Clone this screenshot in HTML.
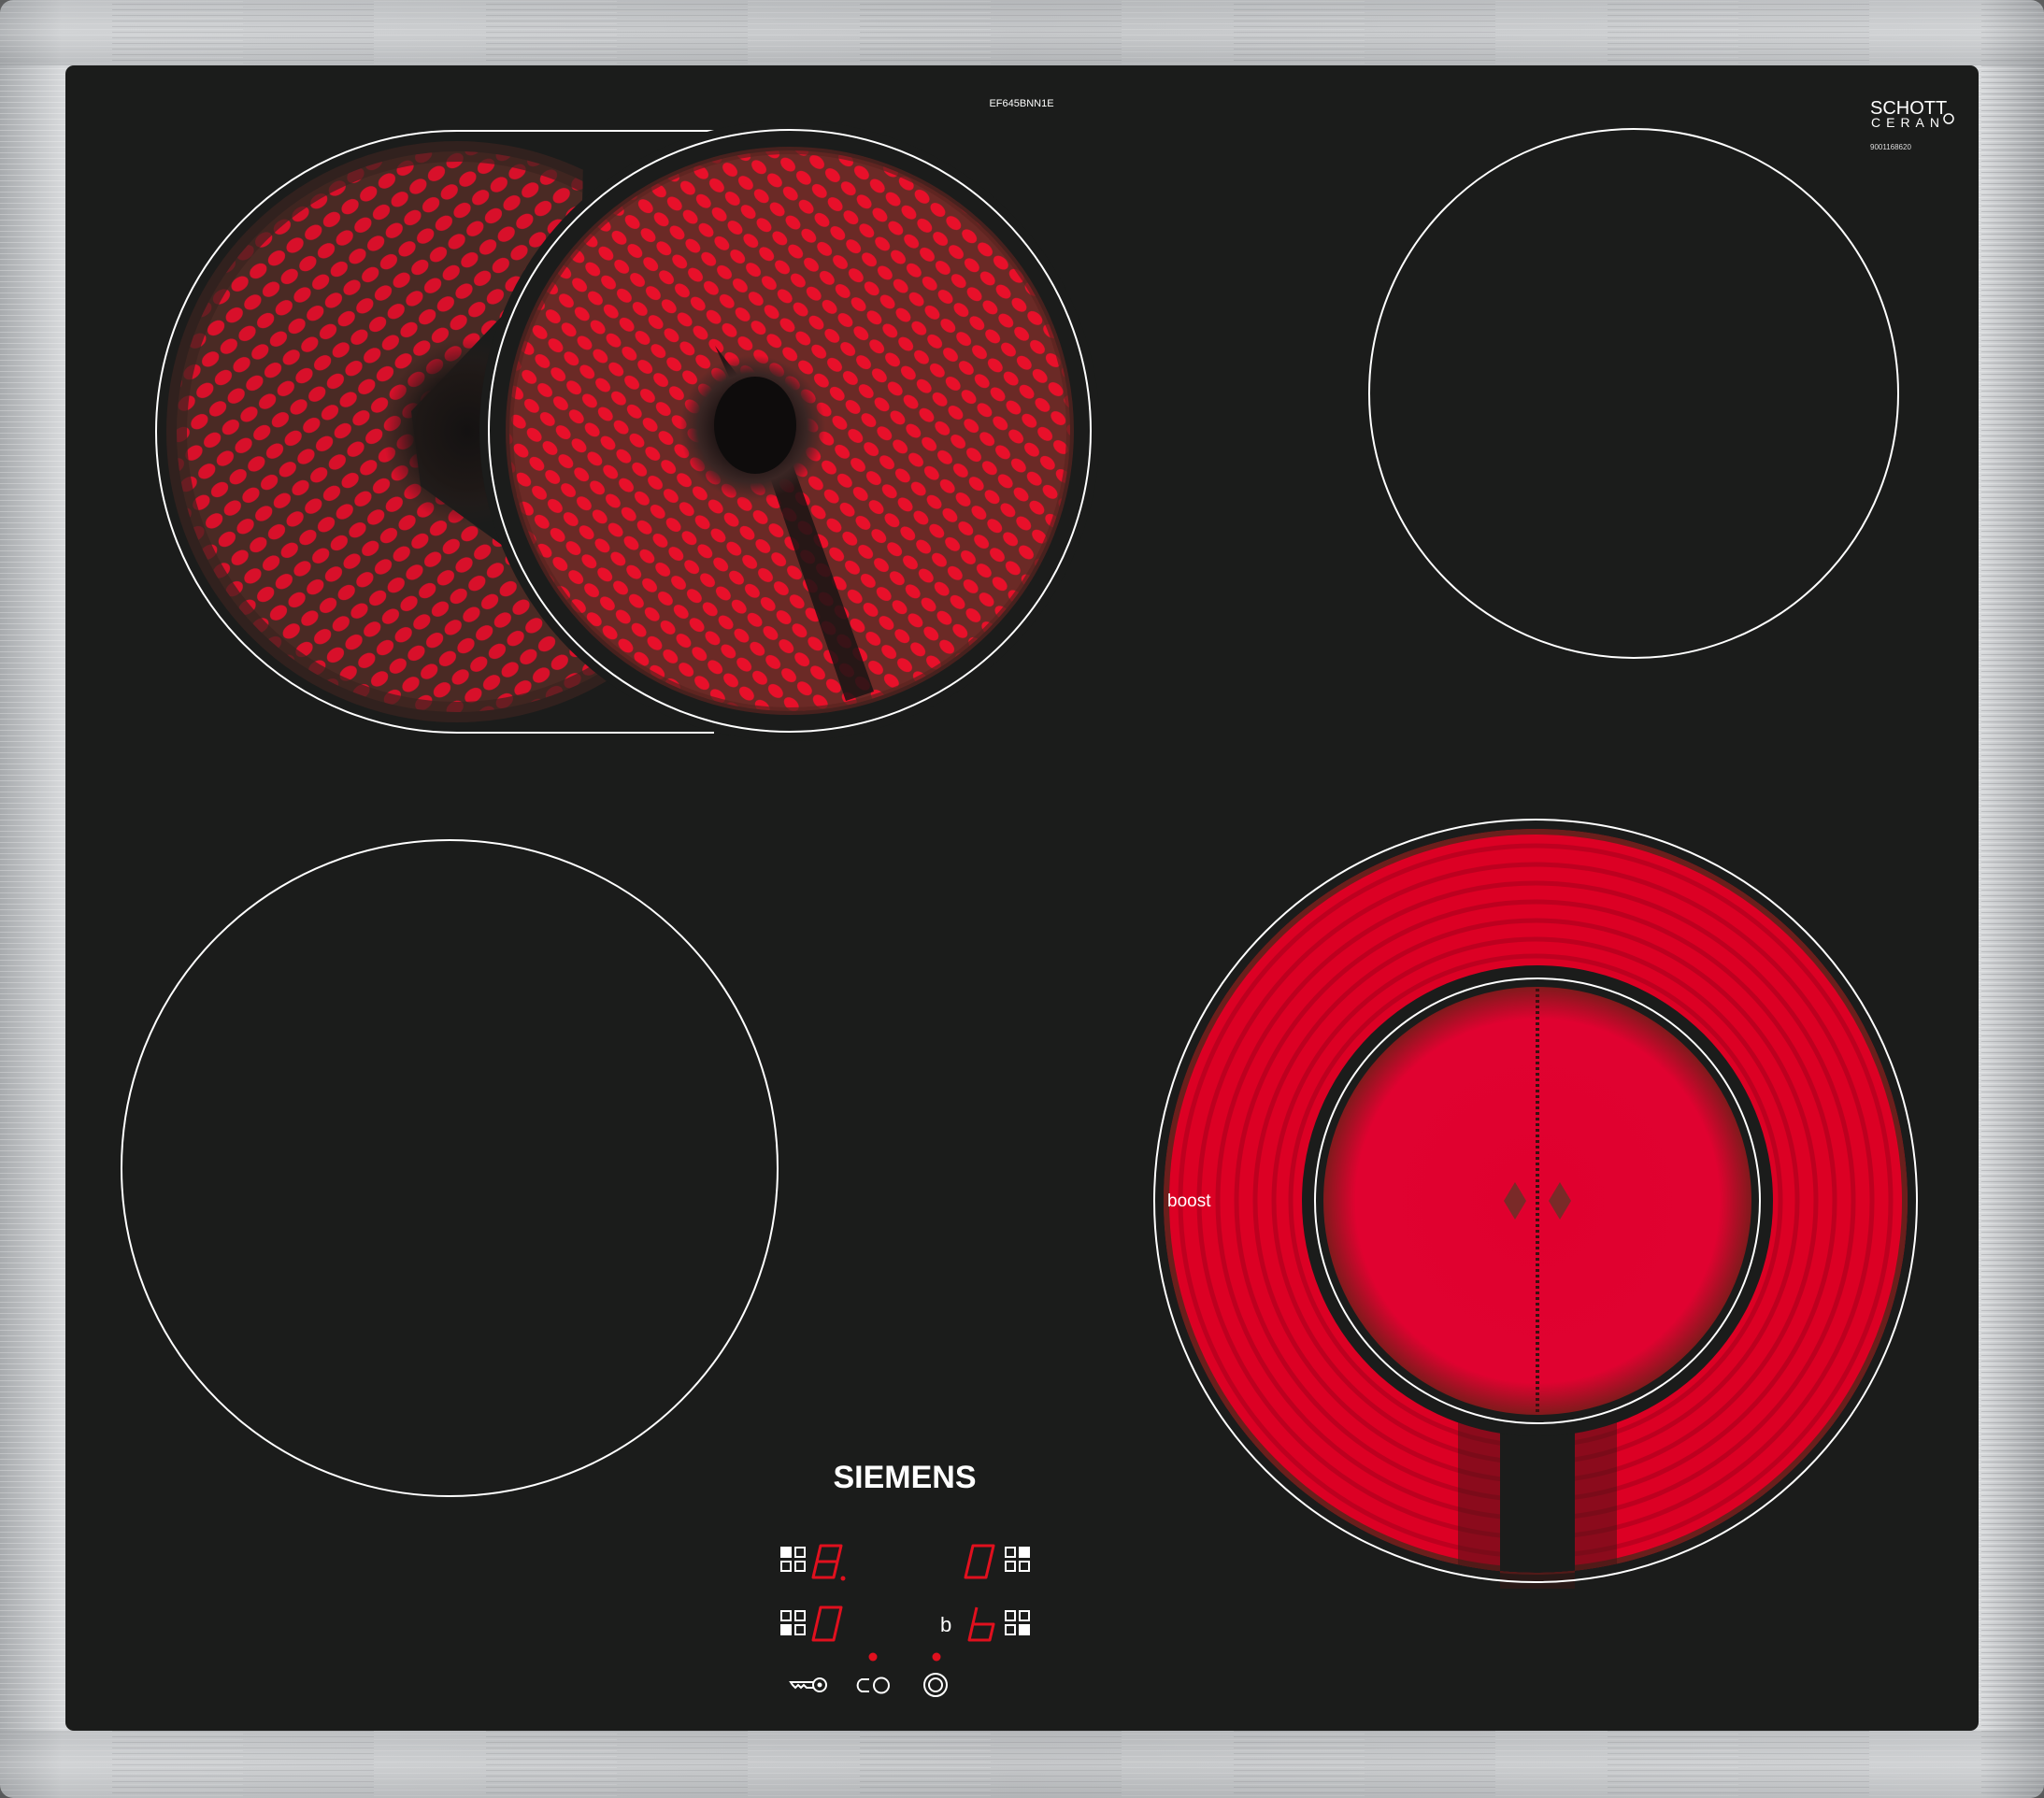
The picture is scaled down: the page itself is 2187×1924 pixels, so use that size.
<!DOCTYPE html>
<html><head><meta charset="utf-8"><style>
html,body{margin:0;padding:0;background:#3a3a3a;}
svg{display:block}
text{font-family:"Liberation Sans","DejaVu Sans",sans-serif}
</style></head><body>
<svg width="2187" height="1924" viewBox="0 0 2187 1924" xmlns="http://www.w3.org/2000/svg">
<defs>
 <linearGradient id="steelV" x1="0" y1="0" x2="0" y2="1">
  <stop offset="0" stop-color="#9a9da0"/><stop offset="0.5" stop-color="#c9cbcd"/><stop offset="1" stop-color="#8e9194"/>
 </linearGradient>
 <linearGradient id="steelH" x1="0" y1="0" x2="1" y2="0">
  <stop offset="0" stop-color="#a8abae"/><stop offset="0.03" stop-color="#d6d8da"/><stop offset="0.5" stop-color="#c4c6c8"/><stop offset="0.97" stop-color="#d6d8da"/><stop offset="1" stop-color="#a0a3a6"/>
 </linearGradient>
 <pattern id="brush" width="400" height="6" patternUnits="userSpaceOnUse">
  <rect width="400" height="6" fill="none"/>
  <rect x="0" y="1" width="260" height="1" fill="#ffffff" opacity="0.25"/>
  <rect x="120" y="4" width="280" height="1" fill="#6a6d70" opacity="0.25"/>
 </pattern>
 <pattern id="dots" width="22" height="22" patternUnits="userSpaceOnUse" patternTransform="rotate(40)">
  <rect width="22" height="22" fill="#6b2a26"/>
  <ellipse cx="11" cy="11" rx="9" ry="6" fill="#e8102a"/>
 </pattern>
 <pattern id="dots2" width="24" height="24" patternUnits="userSpaceOnUse" patternTransform="rotate(-35)">
  <rect width="24" height="24" fill="#4a2a24"/>
  <ellipse cx="12" cy="12" rx="10" ry="7" fill="#d8102a"/>
 </pattern>
 <radialGradient id="hub" cx="0.5" cy="0.5" r="0.5">
  <stop offset="0" stop-color="#0c0a0a"/><stop offset="0.45" stop-color="#1a1212"/><stop offset="0.75" stop-color="#3a2624"/><stop offset="1" stop-color="#3a2624" stop-opacity="0"/>
 </radialGradient>
 <radialGradient id="notch" cx="0.5" cy="0.5" r="0.5">
  <stop offset="0" stop-color="#141212"/><stop offset="0.6" stop-color="#1e1816"/><stop offset="1" stop-color="#2a1e1c" stop-opacity="0"/>
 </radialGradient>
 <radialGradient id="innerRed" cx="0.5" cy="0.5" r="0.5">
  <stop offset="0" stop-color="#e0002e"/><stop offset="0.85" stop-color="#e00230"/><stop offset="1" stop-color="#801a1c"/>
 </radialGradient>
 <clipPath id="leftClip">
  <path d="M150 120 L625 130 L622 260 L545 330 L440 440 L450 520 L560 600 L650 690 L700 800 L150 800 Z"/>
 </clipPath>
 <clipPath id="ringClip">
  <path d="M1643 887 A398 398 0 1 1 1642.9 887 Z M1605 1490 L1605 1700 L1685 1700 L1685 1490 Z" clip-rule="evenodd"/>
 </clipPath>
</defs>

<rect x="0" y="0" width="2187" height="1924" rx="14" fill="url(#steelH)"/>
<rect x="0" y="0" width="2187" height="1924" rx="14" fill="url(#brush)"/>
<rect x="0" y="0" width="2187" height="70" fill="url(#steelV)" opacity="0.35"/>
<rect x="0" y="1852" width="2187" height="72" fill="url(#steelV)" opacity="0.35"/>

<rect x="70" y="70" width="2047" height="1782" rx="9" fill="#1b1c1b"/>

<!-- left extension -->
<g clip-path="url(#leftClip)">
 <circle cx="489" cy="462" r="300" fill="url(#dots2)"/>
 <circle cx="489" cy="462" r="300" fill="none" stroke="#3a2420" stroke-width="22" opacity="0.7"/>
</g>
<ellipse cx="500" cy="462" rx="90" ry="100" fill="url(#notch)"/>
<path d="M764 140 L489 140 A322 322 0 0 0 489 784 L764 784" fill="none" stroke="#fff" stroke-width="2"/>
<!-- inner main -->
<circle cx="845" cy="461" r="332" fill="#1b1c1b"/>
<circle cx="845" cy="461" r="300" fill="url(#dots)"/>
<circle cx="845" cy="461" r="300" fill="none" stroke="#5a2420" stroke-width="8" opacity="0.7"/>
<path d="M765 370 L810 470 L905 750 L935 740 L835 460 Z" fill="#1a1414" opacity="0.85"/>
<circle cx="805" cy="458" r="78" fill="url(#hub)"/>
<ellipse cx="808" cy="455" rx="44" ry="52" fill="#0e0c0c"/>
<circle cx="845" cy="461" r="322" fill="none" stroke="#fff" stroke-width="2"/>

<circle cx="1748" cy="421" r="283" fill="none" stroke="#fff" stroke-width="2"/>
<circle cx="481" cy="1250" r="351" fill="none" stroke="#fff" stroke-width="2"/>

<!-- bottom-right -->
<g clip-path="url(#ringClip)">
 <circle cx="1643" cy="1285" r="398" fill="#dc0024"/>
 <g fill="none" stroke="#b0001e" stroke-width="5" opacity="0.7">
  <circle cx="1643" cy="1285" r="380"/><circle cx="1643" cy="1285" r="360"/><circle cx="1643" cy="1285" r="340"/><circle cx="1643" cy="1285" r="320"/><circle cx="1643" cy="1285" r="300"/><circle cx="1643" cy="1285" r="280"/><circle cx="1643" cy="1285" r="262"/>
 </g>
 <circle cx="1643" cy="1285" r="396" fill="none" stroke="#6a1f1c" stroke-width="8"/>
 <rect x="1560" y="1520" width="170" height="180" fill="#3a1614" opacity="0.5"/>
</g>
<circle cx="1645" cy="1285" r="252" fill="#1b1c1b"/>
<circle cx="1645" cy="1285" r="229" fill="url(#innerRed)"/>
<line x1="1645" y1="1058" x2="1645" y2="1512" stroke="#3a1010" stroke-width="4" stroke-dasharray="3 3"/>
<path d="M1633 1285 l-12 -20 l-12 20 l12 20 Z M1657 1285 l12 -20 l12 20 l-12 20 Z" fill="#7a2a28"/>
<circle cx="1645" cy="1285" r="238" fill="none" stroke="#fff" stroke-width="2"/>
<circle cx="1643" cy="1285" r="408" fill="none" stroke="#fff" stroke-width="2"/>
<text x="1249" y="1291" font-size="19" fill="#fff">boost</text>

<text x="1093" y="114" font-size="11" fill="#fff" text-anchor="middle">EF645BNN1E</text>
<text x="2001" y="122" font-size="20" fill="#fff">SCHOTT</text>
<text x="2002" y="136" font-size="14" fill="#fff" letter-spacing="6">CERAN</text>
<circle cx="2085" cy="127" r="5" fill="none" stroke="#fff" stroke-width="1.5"/>
<text x="2001" y="160" font-size="8" fill="#ddd">9001168620</text>

<text x="968" y="1592" font-size="34" font-weight="bold" fill="#fff" text-anchor="middle">SIEMENS</text>

<g fill="none" stroke="#fff" stroke-width="2">
 <rect x="836" y="1656" width="10" height="10" fill="#fff"/><rect x="851" y="1656" width="10" height="10"/><rect x="836" y="1671" width="10" height="10"/><rect x="851" y="1671" width="10" height="10"/>
 <rect x="1076" y="1656" width="10" height="10"/><rect x="1091" y="1656" width="10" height="10" fill="#fff"/><rect x="1076" y="1671" width="10" height="10"/><rect x="1091" y="1671" width="10" height="10"/>
 <rect x="836" y="1724" width="10" height="10"/><rect x="851" y="1724" width="10" height="10"/><rect x="836" y="1739" width="10" height="10" fill="#fff"/><rect x="851" y="1739" width="10" height="10"/>
 <rect x="1076" y="1724" width="10" height="10"/><rect x="1091" y="1724" width="10" height="10"/><rect x="1076" y="1739" width="10" height="10"/><rect x="1091" y="1739" width="10" height="10" fill="#fff"/>
</g>
<g fill="none" stroke="#e0101e" stroke-width="3" stroke-linejoin="round">
 <path d="M878 1654 L900 1654 L896 1671 L874 1671 Z M874 1671 L896 1671 L892 1688 L870 1688 Z"/>
 <path d="M1041 1654 L1063 1654 L1055 1688 L1033 1688 Z"/>
 <path d="M878 1720 L900 1720 L892 1755 L870 1755 Z"/>
 <path d="M1045 1720 L1037 1755 L1059 1755 L1063 1738 L1041 1738"/>
</g>
<circle cx="902" cy="1689" r="2.5" fill="#e0101e"/>
<text x="1006" y="1746" font-size="22" fill="#fff">b</text>
<circle cx="934" cy="1773" r="4.5" fill="#e0101e"/>
<circle cx="1002" cy="1773" r="4.5" fill="#e0101e"/>
<g fill="none" stroke="#fff" stroke-width="2">
 <circle cx="877" cy="1803" r="7"/>
 <circle cx="877" cy="1803" r="1.5" fill="#fff"/>
 <path d="M870 1800 L846 1800 L848 1803 L851 1806 L854 1803 L857 1806 L860 1803 L863 1806 L870 1806"/>
 <path d="M930 1797 L922 1797 A7 7 0 0 0 922 1810 L930 1810"/>
 <circle cx="943" cy="1803.5" r="8"/>
 <circle cx="1001" cy="1803" r="12"/>
 <circle cx="1001" cy="1803" r="7"/>
</g>
</svg>
</body></html>
